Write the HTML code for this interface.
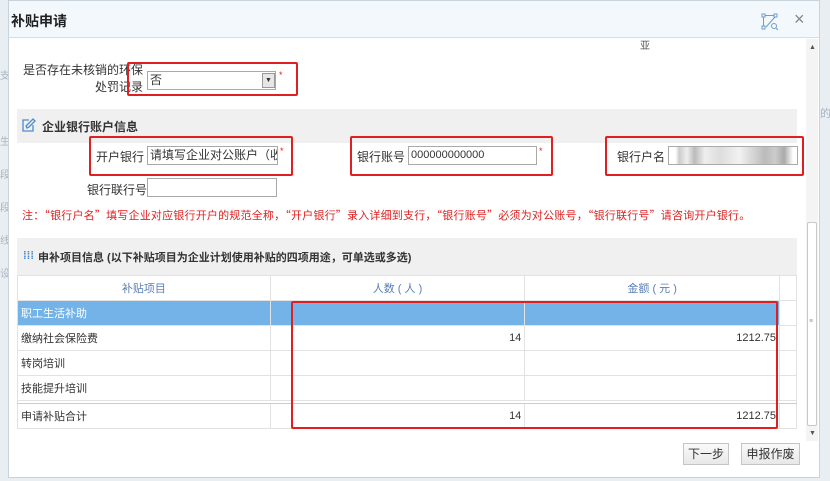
<!DOCTYPE html>
<html><head><meta charset="utf-8"><style>
*{margin:0;padding:0;box-sizing:border-box}
body{width:830px;height:481px;overflow:hidden;background:#e9eef3;font-family:"Liberation Sans","Noto Sans CJK SC",sans-serif;font-size:12px;color:#333;position:relative}
.a{position:absolute}
#dlg{left:8px;top:0;width:812px;height:478px;background:#fff;border:1px solid #c9d3dc}
#title{left:8px;top:0;width:812px;height:38px;background:#f2f8fc;border:1px solid #c9d3dc;border-bottom:1px solid #d5dde5}
.red{border:2px solid #e02020;border-radius:2px}
.inp{border:1px solid #a9a9a9;background:#fff;height:19px;font-size:12px;line-height:17px;padding-left:2px;white-space:nowrap;overflow:hidden}
.lbl{font-size:12px;color:#333;white-space:nowrap}
.sec{background:#f0f0f0}
.star{color:#e02020;font-size:9px}
table{border-collapse:collapse;position:absolute;left:17px;top:275px;width:780px;font-size:11px}
td{border:1px solid #e2e2e2;height:25px;padding:0 3px}
.btn{border:1px solid #c5c5c5;background:linear-gradient(#fafafa,#e8e8e8);height:22px;line-height:20px;text-align:center;font-size:12px}
</style></head><body>
<div class="a" style="left:0;top:60px;color:#a8b4c0;font-size:10px;line-height:33px">支<br><br>生<br>段<br>段<br>线<br>设</div>
<div class="a" style="left:820px;top:105px;color:#a8b4c0;font-size:11px">的</div>
<div id="dlg" class="a"></div>
<div id="title" class="a"></div>
<div class="a" style="left:11px;top:11px;font-size:14px;font-weight:bold;color:#222">补贴申请</div>
<svg class="a" style="left:761px;top:13px" width="18" height="18" viewBox="0 0 18 18" fill="none" stroke="#6f9ccd" stroke-width="1"><rect x="1" y="1" width="3" height="3"/><rect x="13" y="1" width="3" height="3"/><rect x="1" y="13" width="3" height="3"/><path d="M4 2.5h9M2.5 4v9M14 4L5 14"/><circle cx="13" cy="13" r="2.5"/><path d="M15 15l2 2"/></svg>
<div class="a" style="left:794px;top:9px;font-size:18px;color:#888">×</div>
<div class="a" style="left:806px;top:39px;width:12px;height:402px;background:#f4f4f4"></div>
<div class="a" style="left:807px;top:222px;width:10px;height:204px;background:#fff;border:1px solid #c8c8c8;border-radius:2px"></div>
<div class="a" style="left:809px;top:318px;font-size:7px;color:#999">≡</div>
<div class="a" style="left:809px;top:44px;font-size:7px;color:#555">▲</div>
<div class="a" style="left:809px;top:430px;font-size:7px;color:#555">▼</div>
<div class="a" style="left:640px;top:37px;font-size:10px;color:#555">亚</div>

<div class="a lbl" style="left:20px;top:62px;width:123px;text-align:right;line-height:17px">是否存在未核销的环保<br>处罚记录</div>
<div class="a inp" style="left:147px;top:71px;width:129px">否</div>
<div class="a" style="left:262px;top:73px;width:13px;height:15px;background:#e6e6e6;border:1px solid #999;font-size:7px;text-align:center;line-height:13px">▼</div>
<div class="a star" style="left:279px;top:70px">*</div>
<div class="a red" style="left:127px;top:62px;width:171px;height:34px"></div>

<div class="a sec" style="left:17px;top:109px;width:780px;height:34px"></div>
<svg class="a" style="left:22px;top:118px" width="14" height="14" viewBox="0 0 14 14" fill="none" stroke="#4a8bd0" stroke-width="1.3"><path d="M11 7v6H1V2h6"/><path d="M4 8l1 2 2-1 6-6-2-2z"/></svg>
<div class="a" style="left:42px;top:118px;font-size:12px;font-weight:bold;color:#333">企业银行账户信息</div>

<div class="a lbl" style="left:96px;top:148px">开户银行</div>
<div class="a inp" style="left:147px;top:146px;width:131px">请填写企业对公账户（收入</div>
<div class="a star" style="left:280px;top:146px">*</div>
<div class="a red" style="left:89px;top:136px;width:204px;height:40px"></div>
<div class="a lbl" style="left:357px;top:148px">银行账号</div>
<div class="a inp" style="left:408px;top:146px;width:129px;font-size:11px">000000000000</div>
<div class="a star" style="left:539px;top:146px">*</div>
<div class="a red" style="left:350px;top:136px;width:203px;height:40px"></div>
<div class="a lbl" style="left:617px;top:148px">银行户名</div>
<div class="a inp" style="left:668px;top:146px;width:130px;background:linear-gradient(90deg,#fff 5%,#ccc 8%,#eee 14%,#bbb 20%,#eee 28%,#ddd 40%,#f2f2f2 55%,#bbb 75%,#ccc 83%,#aaa 90%,#fff 97%)"></div>
<div class="a red" style="left:605px;top:136px;width:199px;height:40px"></div>

<div class="a lbl" style="left:87px;top:181px">银行联行号</div>
<div class="a inp" style="left:147px;top:178px;width:130px"></div>

<div class="a" style="left:22px;top:207px;font-size:11px;color:#e02020;white-space:nowrap;letter-spacing:0.2px;font-family:'Noto Sans CJK SC',sans-serif">注：“银行户名”填写企业对应银行开户的规范全称，“开户银行”录入详细到支行，“银行账号”必须为对公账号，“银行联行号”请咨询开户银行。</div>

<div class="a sec" style="left:17px;top:238px;width:780px;height:37px"></div>
<div class="a" style="left:23px;top:250px;font-size:11px;color:#4a8bd0;font-weight:bold">⁞⁞⁞</div>
<div class="a" style="left:38px;top:249px;font-size:11px;font-weight:bold;color:#333;white-space:nowrap">申补项目信息 (以下补贴项目为企业计划使用补贴的四项用途，可单选或多选)</div>

<table>
<tr style="color:#5a7fb5;text-align:center"><td style="width:253px">补贴项目</td><td style="width:255px">人数 ( 人 )</td><td style="width:255px">金额 ( 元 )</td><td style="width:17px"></td></tr>
<tr style="background:#74b3e8;color:#fff"><td>职工生活补助</td><td></td><td></td><td style="background:#fff"></td></tr>
<tr><td>缴纳社会保险费</td><td style="text-align:right">14</td><td style="text-align:right">1212.75</td><td></td></tr>
<tr><td>转岗培训</td><td></td><td></td><td></td></tr>
<tr><td>技能提升培训</td><td></td><td></td><td></td></tr>
<tr><td style="height:3px;border-bottom:1px solid #ccc" colspan="4"></td></tr>
<tr><td>申请补贴合计</td><td style="text-align:right">14</td><td style="text-align:right">1212.75</td><td></td></tr>
</table>
<div class="a red" style="left:291px;top:301px;width:487px;height:128px"></div>

<div class="a btn" style="left:683px;top:443px;width:46px">下一步</div>
<div class="a btn" style="left:741px;top:443px;width:59px">申报作废</div>
</body></html>
